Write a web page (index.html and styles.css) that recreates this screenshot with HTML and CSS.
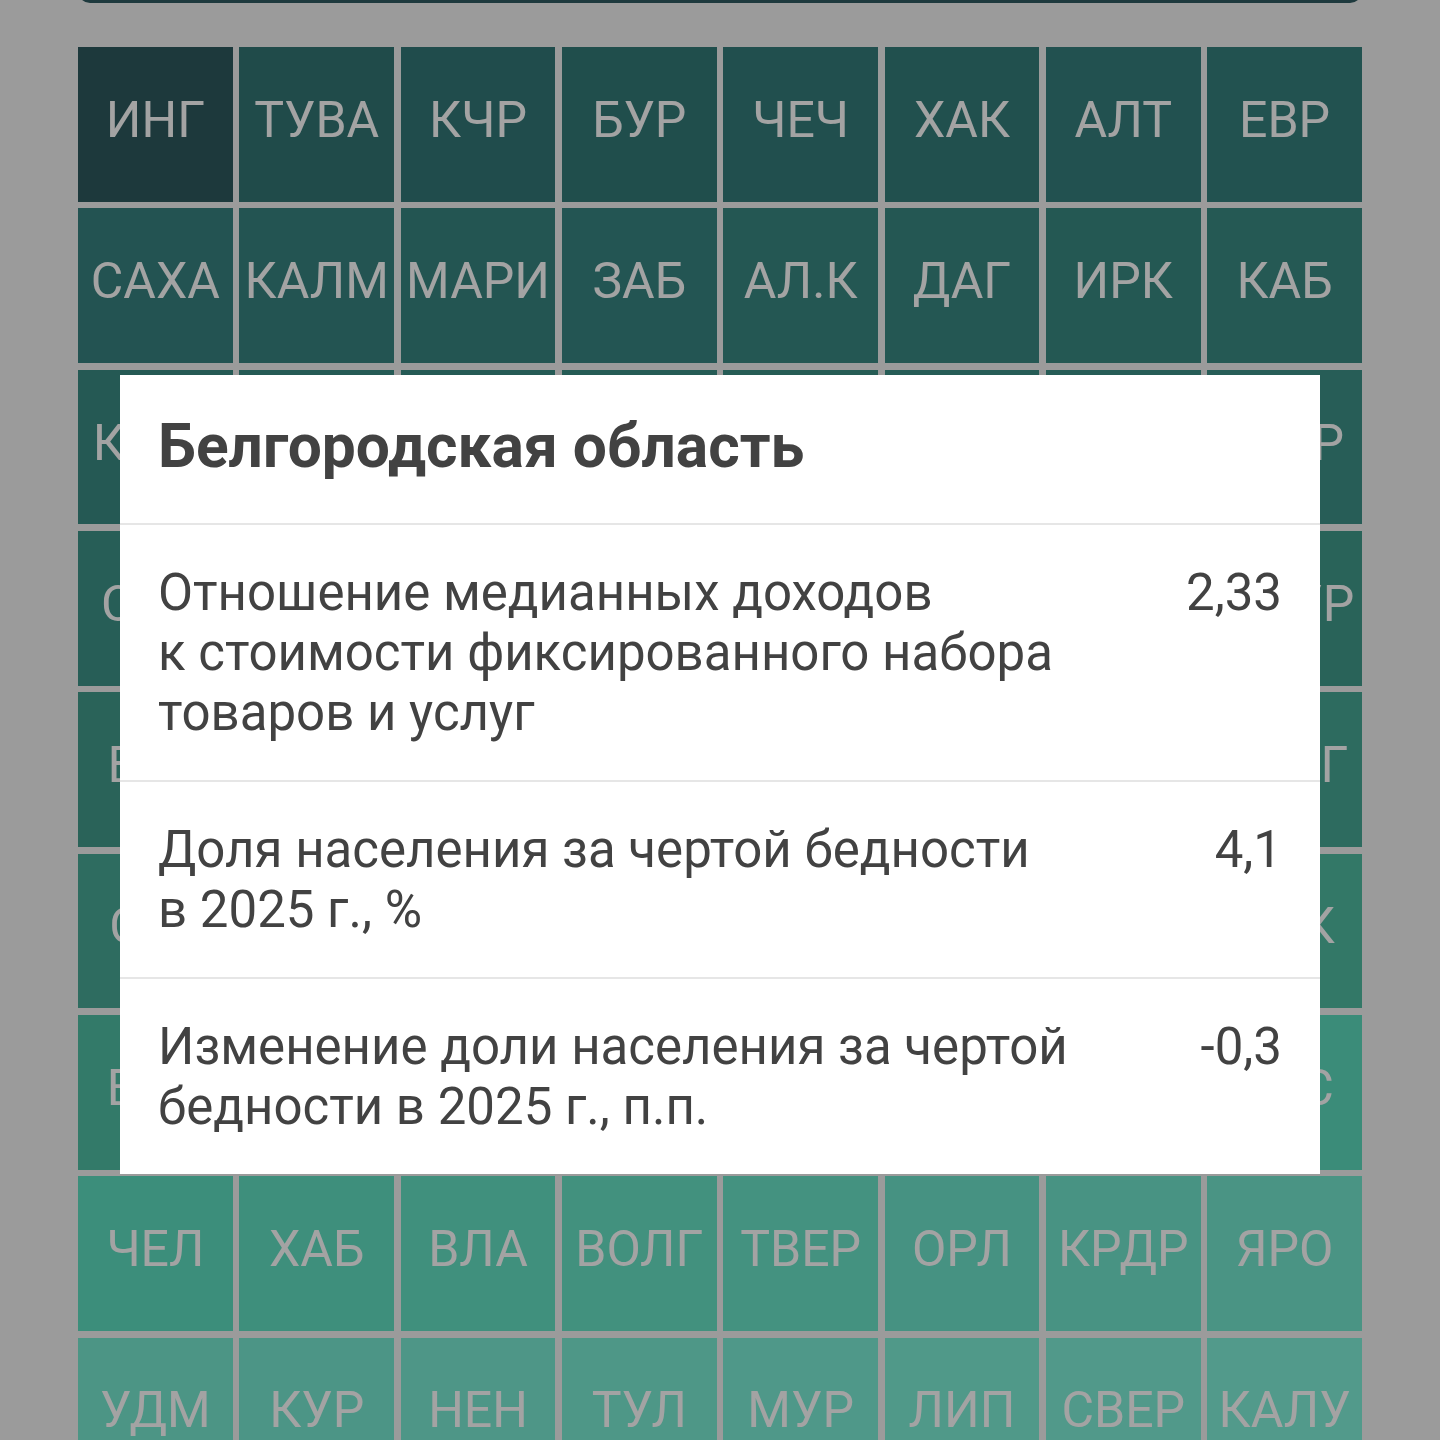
FILE: index.html
```html
<!DOCTYPE html>
<html lang="ru">
  <head>
    <meta charset="UTF-8" />
    <meta name="viewport" content="width=device-width, initial-scale=1.0" />
    <title>Бедность по регионам</title>
    <link rel="stylesheet" href="styles.css">
  </head>
  <body>
    <div class="app">
      <div class="toolbar"></div>
      <div class="grid" id="grid"></div>
    </div>

    <div class="backdrop">
      <div class="dialog">
        <h2 class="dialog-title">Белгородская область</h2>
        <ul class="stats">
          <li class="stat">
            <span class="stat-label">Отношение медианных доходов к&nbsp;стоимости фиксированного набора товаров и&nbsp;услуг</span>
            <span class="stat-value">2,33</span>
          </li>
          <li class="stat">
            <span class="stat-label">Доля населения за чертой бедности в&nbsp;2025&nbsp;г.,&nbsp;%</span>
            <span class="stat-value">4,1</span>
          </li>
          <li class="stat">
            <span class="stat-label">Изменение доли населения за чертой бедности в&nbsp;2025&nbsp;г.,&nbsp;п.п.</span>
            <span class="stat-value">-0,3</span>
          </li>
        </ul>
      </div>
    </div>

    <script>
      const regions = [
        "ИНГ", "ТУВА", "КЧР", "БУР", "ЧЕЧ", "ХАК", "АЛТ", "ЕВР",
        "САХА", "КАЛМ", "МАРИ", "ЗАБ", "АЛ.К", "ДАГ", "ИРК", "КАБ",
        "КРАС", "ЧУВ", "ОМСК", "ПЕРМ", "ТОМ", "НОВГ", "КОМИ", "ТАТР",
        "САМ", "КОСТ", "ПЕНЗ", "СМОЛ", "АРХ", "КРЫМ", "КУРГ", "АМУР",
        "БЕЛ", "МОСК", "МО", "НИЖ", "КАЛИ", "УЛЬЯ", "МУРМ", "ЛЕНГ",
        "СЕВ", "ТЮМ", "ХМАО", "ЯНАО", "ИВАН", "КЕМ", "НОВС", "ПСК",
        "ВОР", "КАМ", "СПБ", "САХЛ", "РЯЗ", "БРЯ", "ОРЕН", "РОС",
        "ЧЕЛ", "ХАБ", "ВЛА", "ВОЛГ", "ТВЕР", "ОРЛ", "КРДР", "ЯРО",
        "УДМ", "КУР", "НЕН", "ТУЛ", "МУР", "ЛИП", "СВЕР", "КАЛУ"
      ];

      // colour scale by rank: [rank, r, g, b]
      const stops = [
        [0, 46, 89, 94],
        [1, 50, 118, 117],
        [8, 55, 131, 128],
        [16, 58, 140, 132],
        [24, 61, 147, 136],
        [32, 66, 156, 139],
        [40, 72, 170, 150],
        [48, 81, 191, 164],
        [56, 95, 223, 192],
        [64, 119, 233, 209],
        [71, 128, 241, 217]
      ];

      const colorAt = (i) => {
        for (let s = 1; s < stops.length; s++) {
          const a = stops[s - 1];
          const b = stops[s];
          if (i <= b[0]) {
            const t = b[0] === a[0] ? 0 : (i - a[0]) / (b[0] - a[0]);
            const mix = (k) => Math.round(a[k] + (b[k] - a[k]) * t);
            return "rgb(" + mix(1) + ", " + mix(2) + ", " + mix(3) + ")";
          }
        }
      };

      const grid = document.querySelector("#grid");
      regions.forEach((name, i) => {
        const tile = document.createElement("div");
        tile.className = "tile";
        tile.textContent = name;
        tile.style.background = colorAt(i);
        grid.appendChild(tile);
      });
    </script>
  </body>
</html>
```

FILE: styles.css
```css
* {
  margin: 0;
  padding: 0;
  box-sizing: border-box;
}
body {
  background: #f2f2f2;
  font-family: Roboto, "Noto Sans", sans-serif;
  height: 1440px;
  overflow: hidden;
}
.app {
  display: flow-root;
  padding: 0 78px;
}
.toolbar {
  height: 60px;
  margin-top: -57px;
  background: #305b61;
  border-radius: 0 0 12px 12px;
}
.grid {
  display: grid;
  grid-template-columns: repeat(8, 1fr);
  gap: 6.5px;
  margin-top: 44px;
}
.tile {
  aspect-ratio: 1;
  display: flex;
  align-items: center;
  justify-content: center;
  color: #fff;
  font-size: 50px;
  padding-bottom: 9px;
  white-space: nowrap;
}
.backdrop {
  position: fixed;
  inset: 0;
  background: rgba(0, 0, 0, 0.36);
  display: flex;
  align-items: center;
  justify-content: center;
  padding: 109px 120px 0;
}
.dialog {
  width: 100%;
  background: #fff;
  color: #424242;
}
.dialog-title {
  font-size: 60.5px;
  font-weight: 700;
  line-height: 76px;
  padding: 34px 38px 38px;
  border-bottom: 2px solid #e6e6e6;
}
.stats {
  list-style: none;
}
.stat {
  display: flex;
  align-items: flex-start;
  padding: 38px 38px 37px;
  font-size: 51px;
  line-height: 60px;
  border-bottom: 2px solid #e6e6e6;
}
.stat:last-child {
  border-bottom: none;
}
.stat-label {
  flex: 1;
}
.stat-value {
  min-width: 120px;
  margin-left: 40px;
  text-align: right;
}
```
